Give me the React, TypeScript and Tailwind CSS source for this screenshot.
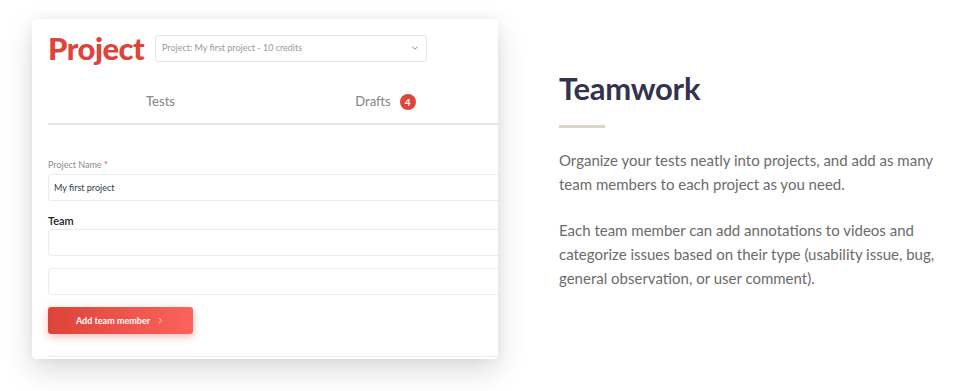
import { ChevronDown, ChevronRight } from "lucide-react";

const font = { fontFamily: "Lato, 'Noto Sans', sans-serif" };

export default function App() {
  return (
    <div className="w-[960px] h-[391px] bg-white flex overflow-hidden" style={font}>
      {/* App mockup card */}
      <div className="pl-8 pt-[19px] w-[527px] shrink-0">
        <div className="w-[466px] h-[340px] bg-white rounded-[4px] overflow-hidden shadow-[0_12px_30px_rgba(0,0,0,0.14),0_0_12px_rgba(0,0,0,0.05)]">
          <div className="pl-4 w-[490px]">
            <div className="flex items-center pt-[10px] h-[48px]">
              <span className="text-[31px] leading-none font-black text-[#e0433a] tracking-[-0.5px] w-[107px]">Project</span>
              <div className="w-[272px] h-[27px] border border-[#e6e6e6] rounded-[3px] flex items-center justify-between px-[6px]">
                <span className="text-[9px] text-[#9a9a9a]">Project: My first project - 10 credits</span>
                <ChevronDown className="w-[10px] h-[10px] text-[#777]" strokeWidth={2} />
              </div>
            </div>

            <div className="flex w-[450px] h-[58px] border-b-2 border-[#e4e4e4]">
              <div className="flex-1 flex items-center justify-center text-[13px] text-[#8c8c8c] font-medium pt-[14px]">Tests</div>
              <div className="flex-1 flex items-center justify-center gap-[9px] text-[13px] text-[#8c8c8c] font-medium pt-[14px]">
                Drafts
                <span className="w-[16px] h-[16px] rounded-full bg-[#e0433a] text-white text-[10px] font-bold flex items-center justify-center">4</span>
              </div>
            </div>

            <div className="pt-[35px] text-[9px] text-[#8c8c8c] leading-none">
              Project Name <span className="text-[#e0433a]">*</span>
            </div>
            <div className="mt-[5px] h-[27px] border border-[#ececec] rounded-[3px] flex items-center px-[5px] text-[9px] text-[#333a4a]">
              My first project
            </div>
            <div className="mt-[14px] text-[11px] text-[#222] font-semibold leading-none">Team</div>
            <div className="mt-[3px] h-[27px] border border-[#ececec] rounded-[3px]" />
            <div className="mt-[12px] h-[27px] border border-[#ececec] rounded-[3px]" />
            <button className="mt-[12px] w-[145px] h-[27px] rounded-[3px] bg-gradient-to-r from-[#dc4439] to-[#fd625c] shadow-[0_3px_8px_rgba(224,67,58,0.35)] flex items-center justify-center gap-[6px] text-white text-[9px] font-bold">
              Add team member
              <ChevronRight className="w-[9px] h-[9px]" strokeWidth={2} />
            </button>
            <div className="mt-[22px] border-t border-[#ececec]" />
          </div>
        </div>
      </div>

      {/* Feature text */}
      <div className="pl-[32px] pt-[68px] w-[420px]">
        <h2 className="text-[31px] leading-[40px] font-bold text-[#33334d] tracking-[-0.3px]">Teamwork</h2>
        <div className="mt-[17px] w-[46px] h-[3px] bg-[#ddd6c8]" />
        <p className="mt-[20px] text-[15px] leading-[24px] text-[#6b6b6b] w-[395px]">
          Organize your tests neatly into projects, and add as many team members to each project as you need.
        </p>
        <p className="mt-[22px] text-[15px] leading-[24px] text-[#6b6b6b] w-[395px]">
          Each team member can add annotations to videos and categorize issues based on their type (usability issue, bug, general observation, or user comment).
        </p>
      </div>
    </div>
  );
}
